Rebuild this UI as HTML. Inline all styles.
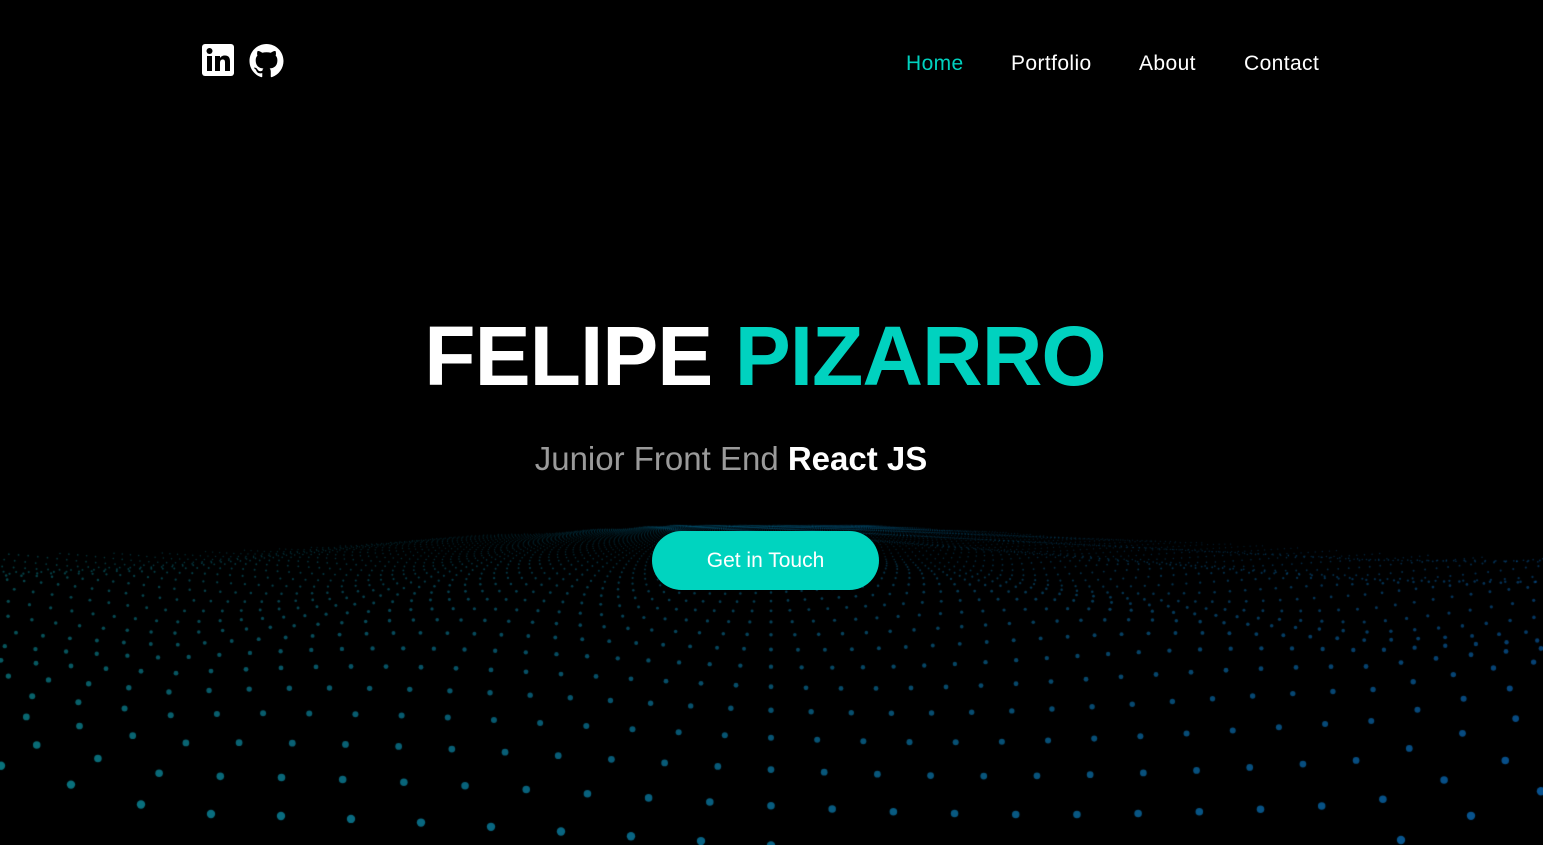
<!DOCTYPE html>
<html><head><meta charset="utf-8"><style>
html,body{margin:0;padding:0;background:#000;width:1543px;height:845px;overflow:hidden;font-family:"Liberation Sans",sans-serif}
canvas{position:absolute;left:0;top:0}
.icons{position:absolute;left:202px;top:44px;display:flex;gap:15px}
nav{position:absolute;top:52px;left:906px;font-size:21px;color:#fff;white-space:nowrap;letter-spacing:0.4px}
nav span{position:absolute;top:0}
h1{position:absolute;top:308px;left:0;width:1530px;text-align:center;margin:0;font-size:84px;font-weight:bold;color:#fff;letter-spacing:-1px}
h1 b{color:#00d2bf}
.sub{position:absolute;top:440px;left:0;width:1462px;text-align:center;font-size:33px;color:#9a9a9a}
.sub b{color:#fff}
.btn{position:absolute;left:652px;top:531px;width:227px;height:59px;border-radius:30px;background:#00d4bf;color:#fff;font-size:21px;text-align:center;line-height:59px}
</style></head><body>
<canvas id="c" width="1543" height="845"></canvas>
<div class="icons">
<svg width="32" height="32" viewBox="0 0 32 32"><rect x="0" y="0" width="32" height="32" rx="3" fill="#fff"/><rect x="5" y="12" width="5" height="15" fill="#000"/><circle cx="7.5" cy="7" r="3" fill="#000"/><path d="M13 12h5v2c1-1.5 2.5-2.5 5-2.5 4 0 5 2.5 5 6V27h-5v-8.5c0-2-.5-3-2.3-3S18 16.8 18 19v8h-5z" fill="#000"/></svg>
<svg width="35" height="34" viewBox="0 0 16 16"><path fill="#fff" d="M8 0C3.580 0 0 3.58 0 8c0 3.54 2.290 6.53 5.470 7.59.4.07.55-.17.55-.38 0-.19-.01-.82-.01-1.49-2.010.37-2.530-.49-2.690-.94-.09-.23-.48-.94-.82-1.130-.28-.15-.68-.52-.01-.53.63-.01 1.080.58 1.230.82.72 1.210 1.870.87 2.330.66.07-.52.28-.87.51-1.070-1.780-.2-3.640-.89-3.640-3.950 0-.87.31-1.590.82-2.150-.08-.2-.36-1.020.08-2.120 0 0 .67-.21 2.200.82.64-.18 1.320-.27 2-.27.68 0 1.360.09 2 .27 1.530-1.040 2.200-.82 2.200-.82.44 1.100.16 1.920.08 2.120.51.56.82 1.270.82 2.150 0 3.070-1.870 3.750-3.650 3.950.29.25.54.73.54 1.480 0 1.070-.01 1.930-.01 2.200 0 .21.15.46.55.38A8.013 8.013 0 0016 8c0-4.420-3.580-8-8-8z"/></svg>
</div>
<nav><span style="left:0;color:#00d2bf">Home</span><span style="left:105px">Portfolio</span><span style="left:233px">About</span><span style="left:338px">Contact</span></nav>
<h1>FELIPE <b>PIZARRO</b></h1>
<div class="sub">Junior Front End <b>React JS</b></div>
<div class="btn">Get in Touch</div>
<script>
var c=document.getElementById('c').getContext('2d');
var H=520,cx=771;
for(var r=0;r<60;r++){
  var z=1+r*0.13+r*r*0.014;
  var y0=H+315/z;
  for(var i=-80;i<=80;i++){
    var x=cx+i*70/z;
    if(x<-10||x>1553)continue;
    var w=Math.sin(i*0.22+z*0.5)*22/z;
    var edge=Math.max(0,Math.abs(x-cx)-600)/140;
    var y=y0+w-edge*40/z;
    if(y<512)continue;
    var rad=Math.max(0.6,4.2/Math.pow(z,0.8));
    var a=Math.min(1,0.95/Math.pow(z,0.35));
    var t=x/1543;
    var R=Math.round(10*(1-t)+8*t),G=Math.round(120*(1-t)+85*t),B=Math.round(130*(1-t)+150*t);
    c.fillStyle='rgba('+R+','+G+','+B+','+a+')';
    c.beginPath();c.arc(x,y,rad,0,6.283);c.fill();
  }
}
</script>
</body></html>
